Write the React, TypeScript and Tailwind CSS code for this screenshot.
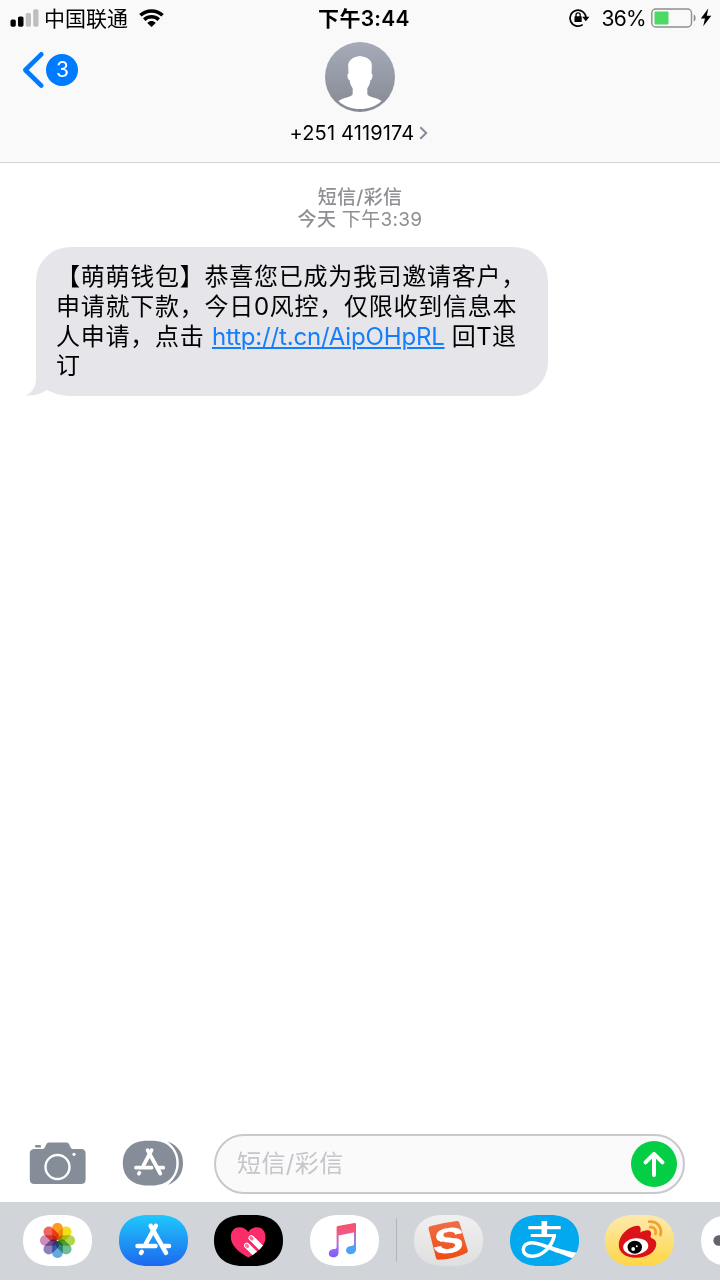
import React from 'react';

const PILL =
  'M29 0H40C58 0 69 9.5 69 25.5S58 51 40 51H29C11 51 0 41.5 0 25.5S11 0 29 0Z';

const petals = [
  { angle: 0, color: '#fb9a1f' },
  { angle: 45, color: '#f1df1c' },
  { angle: 90, color: '#b0d650' },
  { angle: 135, color: '#70bf94' },
  { angle: 180, color: '#66a9e0' },
  { angle: 225, color: '#8c80bd' },
  { angle: 270, color: '#d08cba' },
  { angle: 315, color: '#f2635c' },
];

function AppPill({ children, fill = '#fff' }: { children: React.ReactNode; fill?: string }) {
  return (
    <svg className="h-[51px] w-[69px] shrink-0" viewBox="0 0 69 51">
      <path d={PILL} fill={fill} />
      {children}
    </svg>
  );
}

function StatusBar() {
  return (
    <div className="grid h-[37px] grid-cols-3 items-center text-[21px] leading-none text-black">
      <div className="flex items-center pl-[10px]">
        <svg className="-mt-[2px] h-[18px] w-[29px]" viewBox="0 0 29 18">
          <rect x="0.5" y="10.5" width="5.3" height="7.2" rx="1.6" fill="#000" />
          <rect x="8" y="7.5" width="5.5" height="10.2" rx="1.6" fill="#000" />
          <rect x="15.7" y="4" width="5.3" height="13.7" rx="1.6" fill="#bebebe" />
          <rect x="23.2" y="0.3" width="5.3" height="17.4" rx="1.6" fill="#bebebe" />
        </svg>
        <span className="ml-[5px] whitespace-nowrap">中国联通</span>
        <svg className="-mt-[2px] ml-[11px] h-[18px] w-[25px]" viewBox="0 0 25 18" fill="none" stroke="#000" strokeWidth="3.5">
          <path d="M1.4 6.3C7.7.4 17.3.4 23.6 6.3" />
          <path d="M5.2 10.6C9.5 6.8 15.5 6.8 19.8 10.6" />
          <path d="M8.3 13.9C10.8 11.4 14.2 11.4 16.7 13.9L12.5 17.9Z" fill="#000" stroke="none" />
        </svg>
      </div>
      <div className="whitespace-nowrap pl-[8px] text-center font-semibold tracking-[0.3px]">下午3:44</div>
      <div className="flex items-center justify-end pr-[8px]">
        <svg className="-mt-[2px] h-[20px] w-[22px]" viewBox="0 0 22 20" fill="none" stroke="#000" strokeWidth="1.7">
          <path d="M14.7 16.6A8 8 0 1 1 18 10" />
          <path d="M14.2 8.8H21.4L17.8 13.2Z" fill="#000" stroke="none" />
          <rect x="6.5" y="8.3" width="7.2" height="5.7" rx="0.6" fill="#000" stroke="none" />
          <path d="M8 9V6.9A2.1 2.1 0 0 1 12.2 6.9V9" strokeWidth="1.3" />
        </svg>
        <span className="ml-[11px] tracking-[-0.7px]">36%</span>
        <svg className="-mt-[2px] ml-[5px] h-[20px] w-[46px]" viewBox="0 0 46 20">
          <rect x="0.8" y="1" width="39.7" height="18" rx="4" fill="none" stroke="#8e8e8e" strokeWidth="1.4" />
          <rect x="3.5" y="3.5" width="14" height="13" rx="1" fill="#4cd964" />
          <path d="M42.7 6.5C45.3 7.5 45.3 12.5 42.7 13.5Z" fill="#8e8e8e" />
        </svg>
        <svg className="-mt-[2px] ml-[3px] h-[19px] w-[12px]" viewBox="0 0 12 19">
          <path d="M8.3 0.5L0.8 10.5H5L3.2 18.3L11.3 7.7H6.8Z" fill="#000" />
        </svg>
      </div>
    </div>
  );
}

function ContactHeader() {
  return (
    <div className="grid grid-cols-3 text-black">
      <div className="flex items-start pl-[22px] pt-[14px]">
        <svg className="h-[38px] w-[23px]" viewBox="0 0 23 38" fill="none">
          <path d="M19.3 3.3L3.3 19L19.3 34.7" stroke="#007aff" strokeWidth="4.6" strokeLinecap="round" strokeLinejoin="round" />
        </svg>
        <span className="ml-[1.4px] mt-[3px] flex h-[32px] w-[32px] items-center justify-center rounded-full bg-[#007aff] text-[21px] text-white">
          3
        </span>
      </div>
      <div className="flex flex-col items-center pt-[5px]">
        <svg className="h-[70px] w-[70px]" viewBox="0 0 70 70">
          <defs>
            <linearGradient id="avatar" x1="0" y1="0" x2="0" y2="1">
              <stop offset="0" stopColor="#a5abb9" />
              <stop offset="1" stopColor="#858993" />
            </linearGradient>
          </defs>
          <circle cx="35" cy="35" r="35" fill="url(#avatar)" />
          <path
            d="M35 14C27 15 22.5 19 23.2 25L23.5 31.5C21.7 31.7 22.2 37 24.6 38.3C25 41.5 26 44.3 27.7 46.2V52C26.5 55.5 18.5 55.2 13.5 59C19 64.5 27 67 35 67S51 64.5 56.5 59C51.5 55.2 43.5 55.5 42.3 52V46.2C44 44.3 45 41.5 45.4 38.3C47.8 37 48.3 31.7 46.5 31.5L46.8 25C47.3 19.5 45 15.5 35 14Z"
            fill="#fff"
          />
        </svg>
        <div className="mt-[9px] flex items-center whitespace-nowrap pr-[2px] text-[20px] leading-[24px] tracking-[0.15px]">
          <span>+251 4119174</span>
          <svg className="ml-[5px] h-[14px] w-[9px]" viewBox="0 0 9 14" fill="none">
            <path d="M1.3 1.3L7.2 7L1.3 12.7" stroke="#858b98" strokeWidth="2" />
          </svg>
        </div>
      </div>
    </div>
  );
}

function AppStoreGlyph() {
  return (
    <g fill="none" stroke="#fff" strokeWidth="4.5" strokeLinecap="round">
      <path d="M36.8 10.8L26.7 29" />
      <path d="M31.7 10.8L47 37.8" />
      <path d="M18.5 31H36.5M44.5 31H50" />
      <path d="M22.8 36.8L22 38" />
    </g>
  );
}

function Composer() {
  return (
    <div className="flex h-[68px] items-center pl-[29px]">
      <svg className="-mt-[2px] h-[45px] w-[58px] shrink-0" viewBox="0 0 58 45">
        <path
          d="M5.5 8H13.5C17 8 16.2 1.5 20 1.5H37.5C41.3 1.5 40.5 8 44 8H52C55 8 56.6 9.6 56.6 12.5V38.5C56.6 41.5 55 43 52 43H5.5C2.5 43 .8 41.5 .8 38.5V12.5C.8 9.6 2.5 8 5.5 8Z"
          fill="#858d99"
        />
        <rect x="6" y="4" width="6" height="2.4" rx="1" fill="#858d99" />
        <circle cx="28.5" cy="26" r="12" fill="none" stroke="#fff" strokeWidth="2.4" />
        <circle cx="45" cy="13.3" r="1.6" fill="#fff" />
      </svg>
      <svg className="-mt-[2px] ml-[35px] h-[46px] w-[62px] shrink-0" viewBox="0 0 62 46">
        <path d="M46 1.5C56.5 6 61 13 61 23S56.5 40.5 46 45C53 38 56.8 32 56.8 23S53 8 46 1.5Z" fill="#858d99" />
        <path d="M25 .7H30C44.5 .7 54.3 9 54.3 23S44.5 45.5 30 45.5H25C10.5 45.5 .8 37 .8 23S10.5 .7 25 .7Z" fill="#858d99" />
        <g fill="none" stroke="#fff" strokeWidth="3.8" strokeLinecap="round">
          <path d="M29.6 10.2L21.5 25.5" />
          <path d="M25.6 10.2L38.3 33.5" />
          <path d="M14 27.7H29.5M36.5 27.7H41.2" />
          <path d="M17.4 32.8L16.9 33.7" />
        </g>
      </svg>
      <div className="-mt-px ml-[30px] flex h-[60px] w-[471px] shrink-0 items-center justify-between rounded-full border-2 border-[#c8c8cd] bg-[#fafafa] pl-[21px] pr-[6px]">
        <span className="pt-px text-[24px] tracking-[0.4px] text-[#c5c5ca]">短信/彩信</span>
        <svg className="h-[46px] w-[46px]" viewBox="0 0 46 46">
          <circle cx="23" cy="23" r="23" fill="#04cd46" />
          <path d="M23 34V13M14.5 21.3L23 12.8L31.5 21.3" fill="none" stroke="#fff" strokeWidth="4" strokeLinecap="round" strokeLinejoin="round" />
        </svg>
      </div>
    </div>
  );
}

function AppDrawer() {
  return (
    <div className="flex h-[78px] items-center gap-[26.5px] overflow-hidden bg-[#d1d4d9] pb-[2px] pl-[23px]">
      <AppPill>
        <g className="isolate">
          {petals.map((petal) => (
            <rect
              key={petal.angle}
              className="mix-blend-multiply"
              x="29.2"
              y="8"
              width="10.6"
              height="17"
              rx="5"
              fill={petal.color}
              transform={`rotate(${petal.angle} 34.5 25.5)`}
            />
          ))}
        </g>
      </AppPill>

      <AppPill fill="url(#store)">
        <defs>
          <linearGradient id="store" x1="0" y1="0" x2="0" y2="1">
            <stop offset="0" stopColor="#1fc8fb" />
            <stop offset="1" stopColor="#1d68ee" />
          </linearGradient>
        </defs>
        <AppStoreGlyph />
      </AppPill>

      <AppPill fill="#000">
        <defs>
          <clipPath id="heart">
            <path d="M34.3 17C39 9.5 51.5 10.5 51.5 22C51.5 31 43 37.5 34.3 42.5C25.5 37.5 16.8 31 16.8 22C16.8 10.5 29.5 9.5 34.3 17Z" />
          </clipPath>
        </defs>
        <g clipPath="url(#heart)">
          <rect x="15" y="10" width="40" height="35" fill="#fd2d6b" />
          <g strokeLinecap="round" fill="none">
            <path d="M37.3 23.3L51 37M32.8 30.8L46 44" stroke="#d8215a" strokeWidth="7" />
            <path d="M37.3 23L51 36.7M32.8 30.5L46 43.7" stroke="#fff" strokeWidth="5.8" />
            <path d="M37 22.8L38 23.8M32.5 30.3L33.5 31.3" stroke="#fd6c98" strokeWidth="3.3" />
          </g>
        </g>
      </AppPill>

      <AppPill>
        <defs>
          <linearGradient id="music" gradientUnits="userSpaceOnUse" x1="36" y1="8" x2="36" y2="42">
            <stop offset="0" stopColor="#fb4e66" />
            <stop offset="0.35" stopColor="#ea5c8c" />
            <stop offset="0.65" stopColor="#a772e6" />
            <stop offset="1" stopColor="#8059ff" />
          </linearGradient>
          <linearGradient id="musicRight" gradientUnits="userSpaceOnUse" x1="36" y1="15" x2="36" y2="36">
            <stop offset="0" stopColor="#e85c8c" />
            <stop offset="0.5" stopColor="#9583dd" />
            <stop offset="1" stopColor="#44a6fb" />
          </linearGradient>
        </defs>
        <path d="M26.6 12.2Q26.6 11.1 27.8 10.9L44.7 7.9Q46 7.8 46 9V16.9L28.6 20.4V37C28.6 40.5 26.5 42.3 23.3 42.3C20.6 42.3 18.8 40.7 18.8 38.4C18.8 35.8 20.8 34.4 23.8 34.1C26 33.9 26.6 33.5 26.6 31.5Z" fill="url(#music)" />
        <path d="M46 16V34C46 37.2 43.9 39.2 40.6 39.2C37.8 39.2 36 37.7 36 35.3C36 32.8 38 31.4 41 31C43.3 30.7 44 30.3 44 28.3V17Z" fill="url(#musicRight)" />
      </AppPill>

      <div className="-mx-[9.5px] h-[44px] w-[1.5px] shrink-0 bg-[#b2b5ba]" />

      <AppPill fill="url(#sogouBg)">
        <defs>
          <linearGradient id="sogouBg" x1="0" y1="0" x2="0" y2="1">
            <stop offset="0" stopColor="#f0f0f0" />
            <stop offset="1" stopColor="#dfdfdf" />
          </linearGradient>
          <linearGradient id="sogou" x1="0" y1="0" x2="0" y2="1">
            <stop offset="0" stopColor="#ee6f49" />
            <stop offset="1" stopColor="#f04b12" />
          </linearGradient>
        </defs>
        <path d="M16 11.3Q30 7.5 43 6Q44.8 5.8 45.3 7.5L53.8 35.3Q54.2 37.2 52.5 38Q39 44.5 24 44.8Q22.3 44.8 22 43L14.6 14Q14.2 12 16 11.3Z" fill="url(#sogou)" />
        <text
          className="font-['Liberation_Sans',Arial,sans-serif] font-bold"
          fontSize="35"
          fill="#fff"
          stroke="#fff"
          strokeWidth="0.4"
          textAnchor="middle"
          transform="translate(33.9 37.7) rotate(-5) skewX(-9) scale(1.32 1)"
        >
          S
        </text>
      </AppPill>

      <AppPill fill="#02a9ee">
        <clipPath id="alipay">
          <path d={PILL} />
        </clipPath>
        <g clipPath="url(#alipay)" fill="none" stroke="#fff">
          <path d="M18.3 12.7H50.7M20.7 20.5H46" strokeWidth="3.2" />
          <path d="M34.3 6V20.5" strokeWidth="5.6" />
          <path d="M44.5 20.5C41 33 32 41.3 22 41.3C10 41.3 11 27.7 21.5 27.7C30 27.7 39 32.5 48 36.5" strokeWidth="3.5" />
          <path d="M38 29.5C46 33 54 35.5 67 37.8L63 43.5C54 40.5 44 36.5 36 32Z" fill="#fff" stroke="none" />
        </g>
      </AppPill>

      <AppPill fill="url(#weiboBg)">
        <defs>
          <linearGradient id="weiboBg" x1="0" y1="0" x2="0" y2="1">
            <stop offset="0" stopColor="#fdeaae" />
            <stop offset="1" stopColor="#fed645" />
          </linearGradient>
        </defs>
        <path
          d="M13.8 29C14.3 22.5 19 16 25.5 12.8C29 11 33.3 10.1 34.8 11.6C36.2 13.2 35.5 15.8 35.3 17.5C38.8 15.2 44 14.1 45.7 16.8C46.8 19 45 21.6 45.8 22.6C47.5 23.8 51.3 24.8 51.3 29C51 37 42 42.8 31 42.8C20.5 42.8 13.2 37.5 13.8 29Z"
          fill="#dc1219"
        />
        <ellipse cx="30.7" cy="31.5" rx="12.6" ry="8.2" fill="#fff" transform="rotate(-6 30.7 31.5)" />
        <ellipse cx="29.8" cy="32.2" rx="7.2" ry="6.5" fill="#000" />
        <circle cx="28.2" cy="34" r="1.9" fill="#fff" />
        <circle cx="31.8" cy="31.3" r="1" fill="#fff" />
        <g fill="none" stroke="#f3a02d" strokeWidth="2.8" strokeLinecap="round">
          <path d="M44.2 6.7C52.5 6 57.3 12.5 55.5 20.2" />
          <path d="M45.2 12.2C49.4 12 51.6 15 50.5 18.8" />
        </g>
      </AppPill>

      <AppPill>
        <circle cx="17.7" cy="25.5" r="5.3" fill="#636369" />
      </AppPill>
    </div>
  );
}

export default function App() {
  return (
    <div className="flex h-[1280px] w-[720px] flex-col overflow-hidden bg-white font-[Inter,'Noto_Sans_CJK_SC',sans-serif]">
      <header className="h-[163px] shrink-0 border-b-[1.5px] border-[#d4d4d6] bg-[#f9f9f9]">
        <StatusBar />
        <ContactHeader />
      </header>

      <main className="flex-1">
        <div className="pt-[24px] text-center text-[19px] leading-[22px] tracking-[0.3px] text-[#8e8e93]">
          <p className="font-medium">短信/彩信</p>
          <p>
            <span className="font-medium">今天</span> 下午3:39
          </p>
        </div>

        <div className="relative ml-[36px] mt-[16px] h-[149px] w-[512px] rounded-[34px] bg-[#e5e5ea] pl-[20px] pt-[15px]">
          {/* Bubble tail */}
          <svg className="absolute -left-[11px] bottom-0 h-[38px] w-[40px]" viewBox="0 0 40 38">
            <path d="M11 0V21C11 28 7 35 1 37.5C9 38 16 36 21.5 32L34 37V0Z" fill="#e5e5ea" />
          </svg>
          <div className="relative whitespace-nowrap text-[24px] leading-[29.8px] tracking-[0.74px] text-black">
            <p>【萌萌钱包】恭喜您已成为我司邀请客户，</p>
            <p>申请就下款，今日0风控，仅限收到信息本</p>
            <p>
              人申请，点击{' '}
              <a className="tracking-[-0.17px] text-[#147efb] underline decoration-2 underline-offset-2">http://t.cn/AipOHpRL</a>
              <span className="tracking-[0.4px]"> 回T退</span>
            </p>
            <p>订</p>
          </div>
        </div>
      </main>

      <Composer />
      <div className="h-[4px] shrink-0" />
      <AppDrawer />
    </div>
  );
}
